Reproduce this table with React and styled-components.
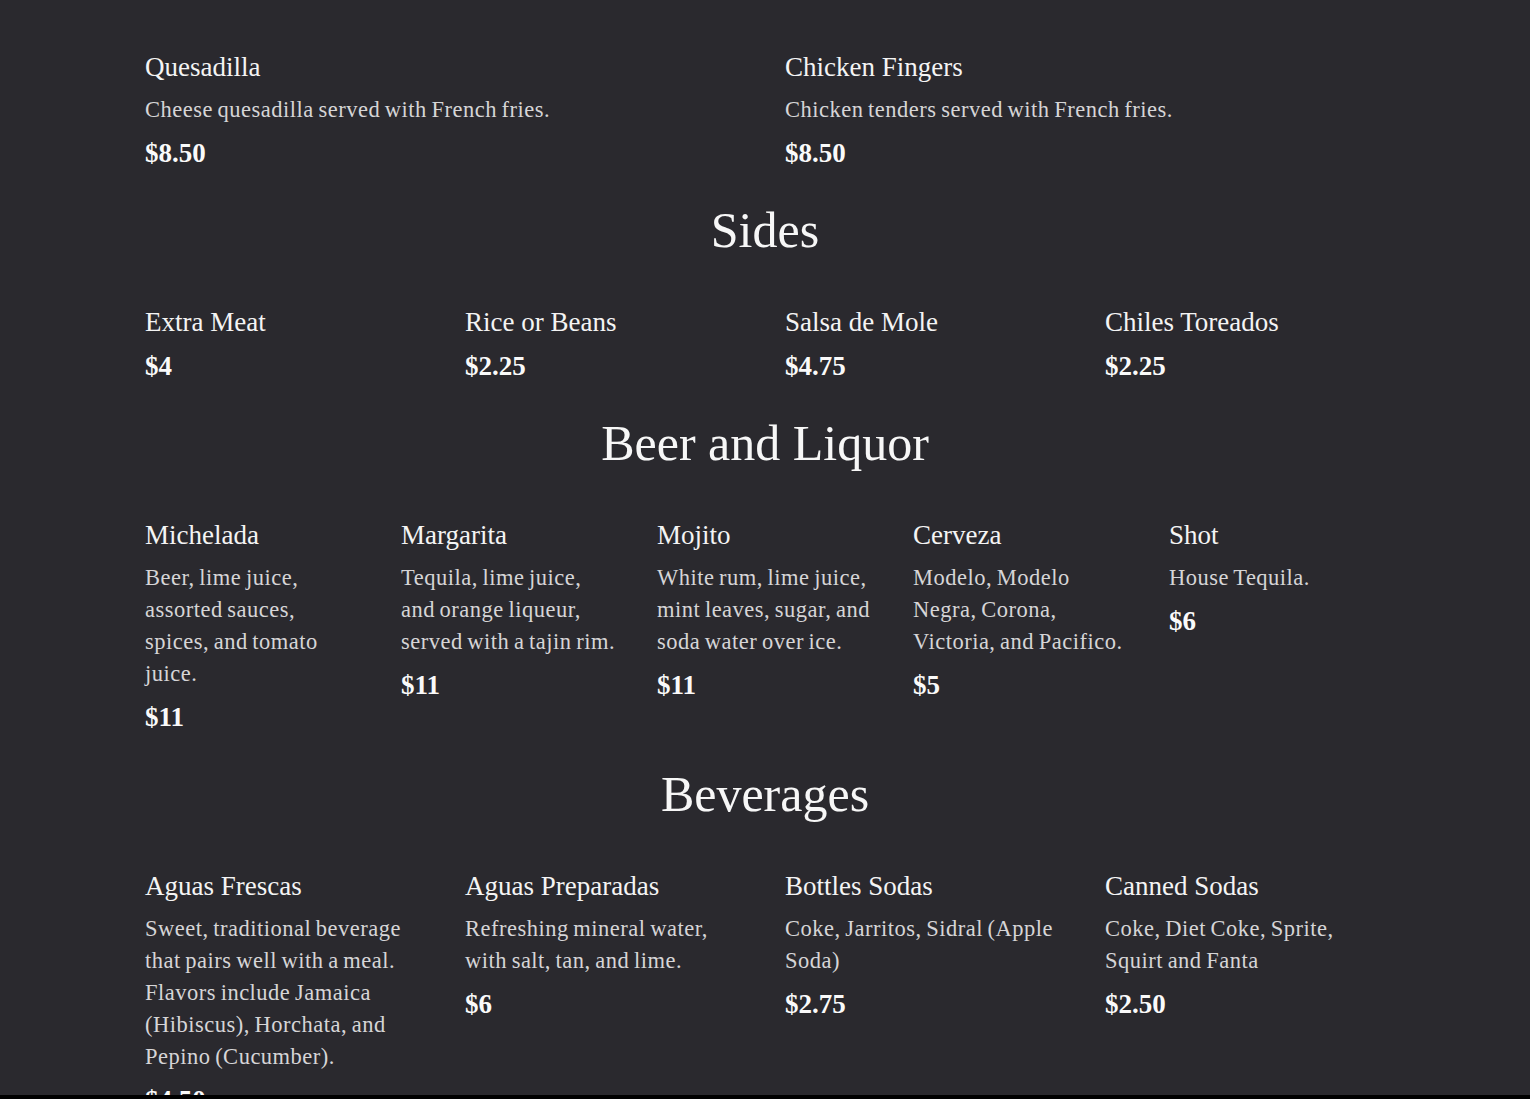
import React from 'react'
import styled, { createGlobalStyle } from 'styled-components';

/*
  menu page - lower half (kids, sides, drinks)
  todo: pull items from the api instead of the consts below
*/

const GlobalStyle = createGlobalStyle`
  html, body {
    margin: 0;
    padding: 0;
    background: #2a292e;
  }
  body {
    font-family: "Liberation Serif", "Times New Roman", serif;
  }
`;

const kidsItems = [
  { name: 'Quesadilla', desc: 'Cheese quesadilla served with French fries.', price: '$8.50' },
  { name: 'Chicken Fingers', desc: 'Chicken tenders served with French fries.', price: '$8.50' }
]

const sections = [
  {
    title: 'Sides',
    cols: 4,
    items: [
      { name: 'Extra Meat', price: '$4' },
      { name: 'Rice or Beans', price: '$2.25' },
      { name: 'Salsa de Mole', price: '$4.75' },
      { name: 'Chiles Toreados', price: '$2.25' }
    ]
  },
  {
    title: 'Beer and Liquor',
    cols: 5,
    items: [
      { name: 'Michelada', desc: 'Beer, lime juice, assorted sauces, spices, and tomato juice.', price: '$11' },
      { name: 'Margarita', desc: 'Tequila, lime juice, and orange liqueur, served with a tajin rim.', price: '$11' },
      { name: 'Mojito', desc: 'White rum, lime juice, mint leaves, sugar, and soda water over ice.', price: '$11' },
      { name: 'Cerveza', desc: 'Modelo, Modelo Negra, Corona, Victoria, and Pacifico.', price: '$5' },
      { name: 'Shot', desc: 'House Tequila.', price: '$6' }
    ]
  },
  {
    title: 'Beverages',
    cols: 4,
    items: [
      { name: 'Aguas Frescas', desc: 'Sweet, traditional beverage that pairs well with a meal. Flavors include Jamaica (Hibiscus), Horchata, and Pepino (Cucumber).', price: '$4.50' },
      { name: 'Aguas Preparadas', desc: 'Refreshing mineral water, with salt, tan, and lime.', price: '$6' },
      { name: 'Bottles Sodas', desc: 'Coke, Jarritos, Sidral (Apple Soda)', price: '$2.75' },
      { name: 'Canned Sodas', desc: 'Coke, Diet Coke, Sprite, Squirt and Fanta', price: '$2.50' }
    ]
  }
]

const PageWrapper = styled.div`
  display: flex;
  flex-direction: column;
  height: 100vh;
`;

const MenuArea = styled.main`
  flex: 1;
  overflow: hidden;
  padding-top: 51px;
`;

const BottomEdge = styled.div`
  height: 4px;
  flex-shrink: 0;
  background: #000;
`;

const MenuContainer = styled.div`
  width: 1240px;
  margin: 0 auto;
`;

const Section = styled.section`
  margin-top: 33px;
`;

const SectionTitle = styled.h2`
  margin: 0 0 48px;
  font-size: 50px;
  line-height: 56px;
  font-weight: 400;
  text-align: center;
  color: #f7f7f7;
`;

const ItemGrid = styled.div`
  display: grid;
  grid-template-columns: repeat(${p => p.cols}, 1fr);
  column-gap: 40px;
  align-items: start;
`;

const Item = styled.div`
  display: flex;
  flex-direction: column;
`;

const ItemName = styled.h3`
  margin: 0;
  font-size: 27px;
  line-height: 32px;
  font-weight: 400;
  color: #f4f4f4;
`;

const ItemDesc = styled.p`
  margin: 11px 0 -1px;
  font-size: 22.5px;
  line-height: 32px;
  letter-spacing: 0.5px;
  word-spacing: -1.5px;
  color: #d6d5d7;
`;

const ItemPrice = styled.span`
  margin-top: 12px;
  font-size: 27px;
  line-height: 32px;
  font-weight: 700;
  color: #fafafa;
`;

const MenuItem = ({ item }) => (
  <Item>
    <ItemName>{item.name}</ItemName>
    {item.desc && <ItemDesc>{item.desc}</ItemDesc>}
    <ItemPrice>{item.price}</ItemPrice>
  </Item>
)

export default function App() {
  return (
    <PageWrapper>
      <GlobalStyle />
      <MenuArea>
        <MenuContainer>
          <ItemGrid cols={2}>
            {kidsItems.map(item => <MenuItem key={item.name} item={item} />)}
          </ItemGrid>
          {sections.map(section => (
            <Section key={section.title}>
              <SectionTitle>{section.title}</SectionTitle>
              <ItemGrid cols={section.cols}>
                {section.items.map(item => <MenuItem key={item.name} item={item} />)}
              </ItemGrid>
            </Section>
          ))}
        </MenuContainer>
      </MenuArea>
      <BottomEdge />
    </PageWrapper>
  )
}
